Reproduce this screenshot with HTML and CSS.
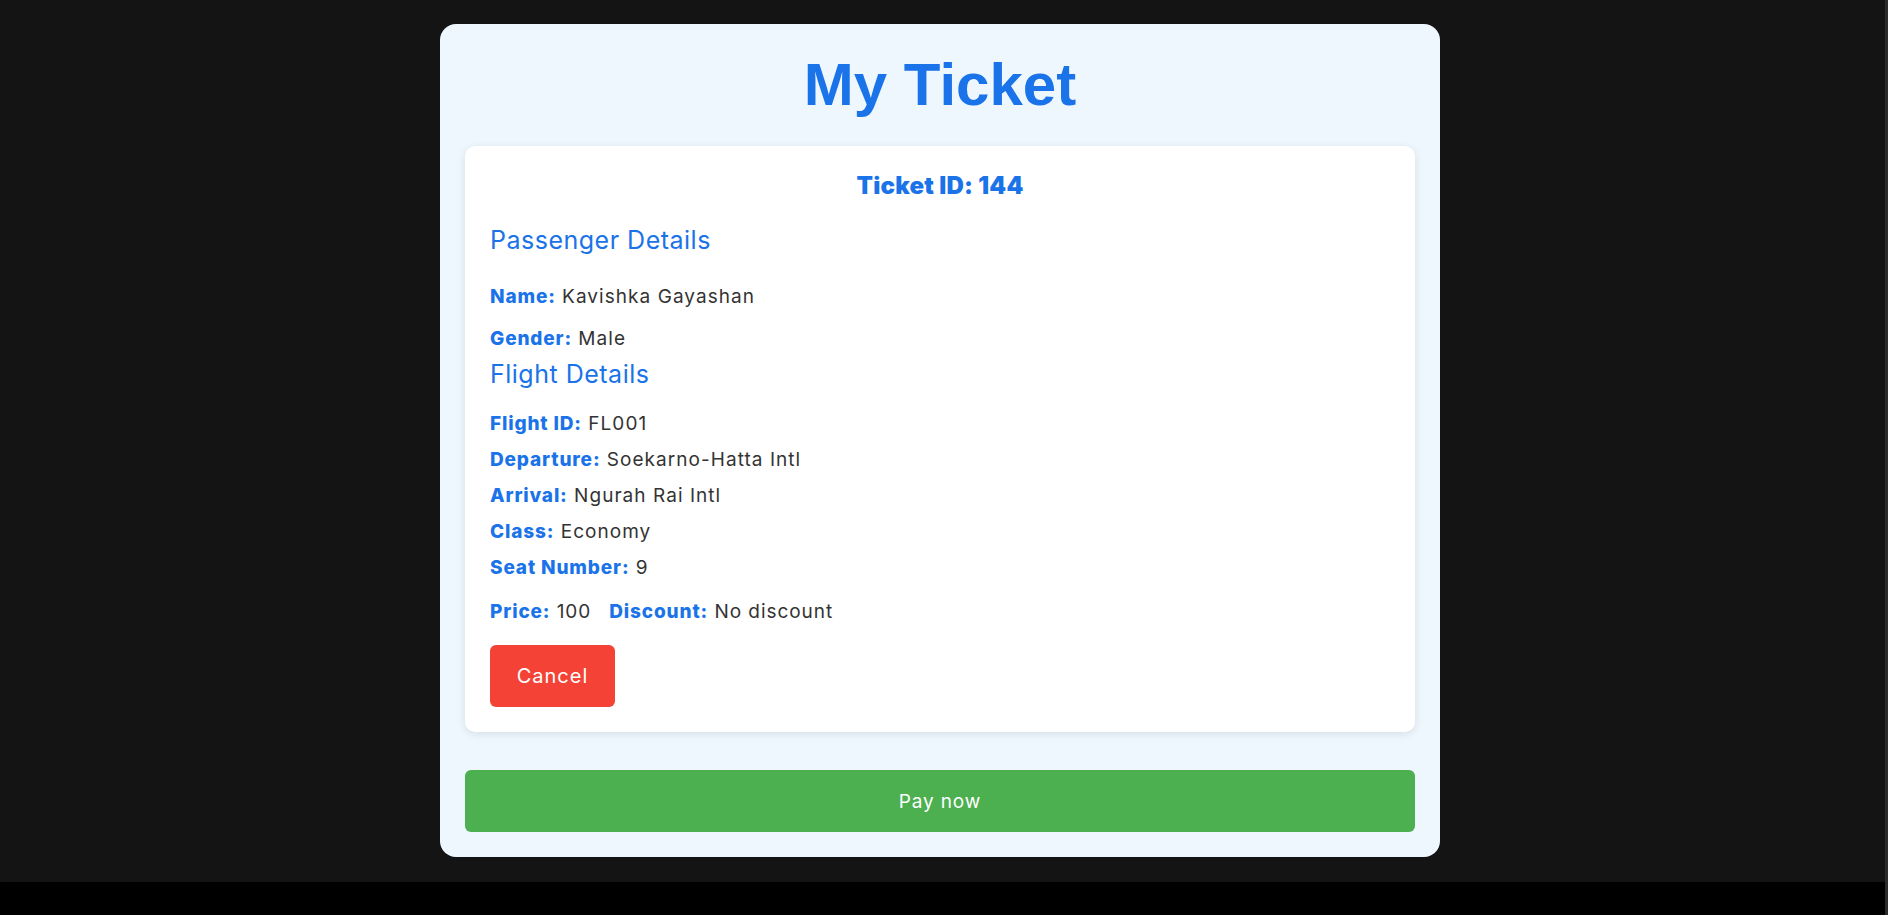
FILE: index.html
```html
<!DOCTYPE html>
<html lang="en">
<head>
<meta charset="utf-8">
<title>My Ticket</title>
<link rel="stylesheet" href="styles.css">
</head>
<body>
  <main class="ticket-wrap">
    <h1 class="title">My Ticket</h1>
    <section class="card">
      <h3 class="ticket-id">Ticket ID: 144</h3>
      <h4 class="section-title">Passenger Details</h4>
      <p class="row row-name"><span class="label">Name:</span> Kavishka Gayashan</p>
      <p class="row row-gender"><span class="label">Gender:</span> Male</p>
      <h4 class="section-title section-flight">Flight Details</h4>
      <p class="row row-first"><span class="label">Flight ID:</span> FL001</p>
      <p class="row"><span class="label">Departure:</span> Soekarno-Hatta Intl</p>
      <p class="row"><span class="label">Arrival:</span> Ngurah Rai Intl</p>
      <p class="row"><span class="label">Class:</span> Economy</p>
      <p class="row"><span class="label">Seat Number:</span> 9</p>
      <div class="price-row">
        <p class="price-item"><span class="label">Price:</span> 100</p>
        <p class="price-item"><span class="label">Discount:</span> No discount</p>
      </div>
      <button class="btn btn-cancel">Cancel</button>
    </section>
    <button class="btn btn-pay">Pay now</button>
  </main>
</body>
</html>
```

FILE: styles.css
```css
html {
  background: #000;
  min-height: 100%;
  border-right: 3px solid #2c2c2c;
}

body {
  margin: 0;
  padding: 24px 5px 25px 0;
  background: #141414;
  font-family: "Inter", "Noto Sans", sans-serif;
  color: #333;
}

.ticket-wrap {
  width: 1000px;
  box-sizing: border-box;
  margin: 0 auto;
  padding: 25px;
  background: #eef6fe;
  border-radius: 16px;
}

.title {
  margin: 1px 0 26px;
  font-family: "Liberation Sans", Arial, sans-serif;
  font-weight: 700;
  font-size: 60px;
  line-height: 70px;
  color: #1a73e8;
  text-align: center;
}

.card {
  background: #fff;
  border-radius: 10px;
  padding: 25px;
  box-shadow: 0 2px 8px rgba(0, 0, 0, 0.1);
}

.ticket-id {
  margin: 2px 0 0;
  font-size: 24px;
  font-weight: 900;
  line-height: 26px;
  letter-spacing: 0.01em;
  color: #1a73e8;
  text-align: center;
}

.section-title {
  margin: 26px 0 0;
  font-size: 25px;
  font-weight: 400;
  line-height: 30px;
  letter-spacing: 0.02em;
  color: #1a73e8;
}

.section-flight {
  margin-top: 8px;
}

.row {
  margin: 12px 0 0;
  font-size: 19px;
  line-height: 24px;
  letter-spacing: 0.055em;
}

.row-name {
  margin-top: 30px;
}

.row-gender {
  margin-top: 18px;
}

.row-first {
  margin-top: 23px;
}

.label {
  font-weight: 800;
  color: #1a73e8;
  letter-spacing: 0.045em;
}

.price-row {
  display: flex;
  gap: 18px;
  margin-top: 20px;
}

.price-item {
  margin: 0;
  font-size: 19px;
  line-height: 24px;
  letter-spacing: 0.05em;
}

.btn {
  display: block;
  border: none;
  border-radius: 6px;
  color: #fff;
  font-family: "Inter", "Noto Sans", sans-serif;
  cursor: pointer;
}

.btn-cancel {
  margin-top: 21px;
  width: 125px;
  height: 62px;
  padding: 0;
  background: #f44336;
  font-size: 20px;
  letter-spacing: 0.05em;
}

.btn-pay {
  margin-top: 38px;
  width: 100%;
  height: 62px;
  background: #4caf50;
  font-size: 19px;
  letter-spacing: 0.045em;
}
```
